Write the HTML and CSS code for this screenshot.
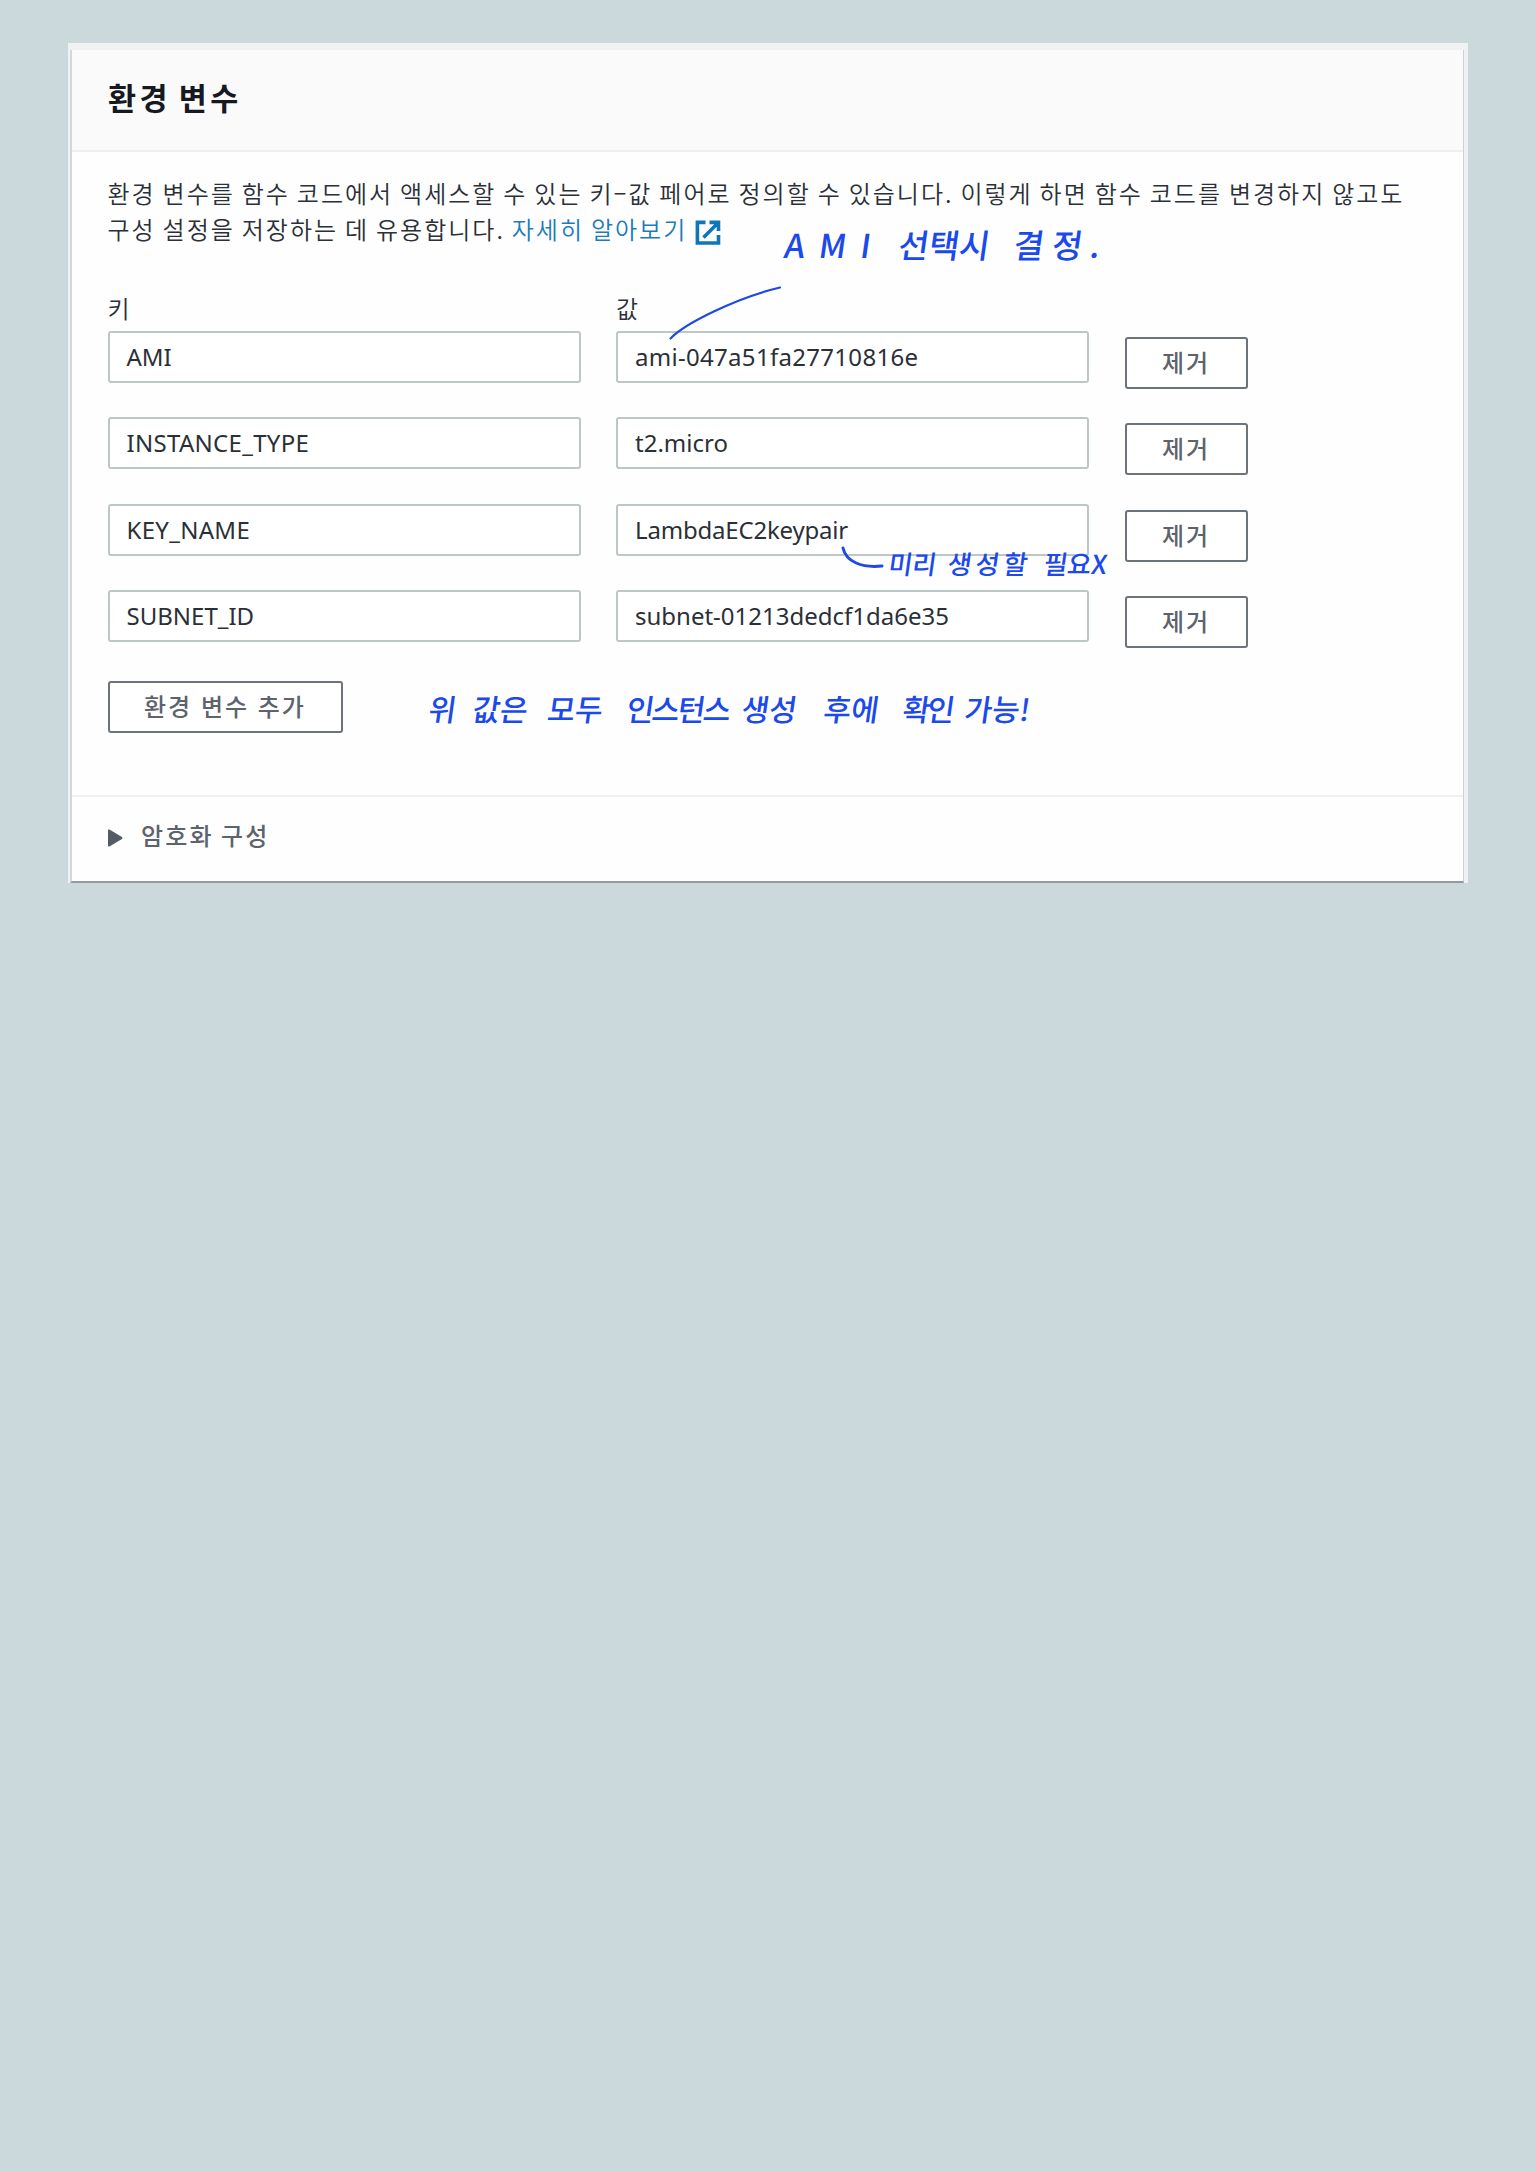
FILE: index.html
```html
<!DOCTYPE html>
<html lang="ko">
<head>
<meta charset="utf-8">
<title>환경 변수</title>
<link rel="stylesheet" href="styles.css">
</head>
<body>
<main class="frame">
  <section class="card">
    <header class="card-header"><h1 class="title">환경 변수</h1></header>
    <div class="card-body">
      <p class="intro">환경 변수를 함수 코드에서 액세스할 수 있는 키–값 페어로 정의할 수 있습니다. 이렇게 하면 함수 코드를 변경하지 않고도<br>구성 설정을 저장하는 데 유용합니다. <a class="link">자세히 알아보기<svg class="external" viewBox="0 0 26 26"><path d="M10.500 2.400H2.400V23H23.500V15" /><path d="M14.500 2.400H23.500V11M22.500 3.500L8.500 17.500" /></svg></a></p>
      <div class="grid labels"><span>키</span><span>값</span></div>
      <div class="grid rows">
        <div class="field">AMI</div><div class="field wide">ami-047a51fa27710816e</div><button class="btn remove">제거</button>
        <div class="field wide">INSTANCE_TYPE</div><div class="field">t2.micro</div><button class="btn remove">제거</button>
        <div class="field wide">KEY_NAME</div><div class="field tight">LambdaEC2keypair</div><button class="btn remove">제거</button>
        <div class="field">SUBNET_ID</div><div class="field">subnet-01213dedcf1da6e35</div><button class="btn remove">제거</button>
      </div>
      <button class="btn add">환경 변수 추가</button>
    </div>
    <footer class="card-footer"><svg class="caret" viewBox="0 0 15 18"><path d="M0 1.2Q0 0 1.4 .6L14 8Q15 9 14 10L1.4 17.4Q0 18 0 16.8Z"/></svg><span>암호화 구성</span></footer>
  </section>
  <svg class="leads" viewBox="0 0 1400 839">
    <path d="M602.500 295.500C616 281 668 255 712 244.500"/>
    <path class="thick" d="M775 505C778 519 794 525 814 523"/>
  </svg>
  <div class="note note-ami"><span class="spread">AMI</span><span>선택시</span><span class="loose">결정.</span></div>
  <div class="note note-key"><span>미리</span><span class="open">생성할</span><span>필요X</span></div>
  <div class="note note-all"><span>위</span><span>값은</span><span>모두</span><span class="close">인스턴스</span><span>생성</span><span>후에</span><span class="packed">확인</span><span>가능!</span></div>
</main>
</body>
</html>
```
FILE: styles.css
```css
* { box-sizing: border-box; }

body {
  margin: 0;
  min-height: 2172px;
  padding: 43px 68px 0;
  background: #cbd9dd;
  color: #2b3038;
  font-family: "Noto Sans CJK KR", "Noto Sans", sans-serif;
}

.frame {
  position: relative;
  width: 1400px;
  height: 840px;
  padding: 7px 4px 0 2px;
  background: #eef2f2;
}

.card {
  display: flex;
  flex-direction: column;
  height: 833px;
  border: solid;
  border-width: 0 1px 2px 2px;
  border-color: #c8cdcf #cdd0d4 #929b9f #d5d8d9;
  background: #fefefe;
}

.card-header {
  height: 102px;
  padding: 0 36px;
  border-bottom: 2px solid #eef0f0;
  background: #fafafa;
}

.title {
  margin: 0;
  color: #16191f;
  font-size: 30.500px;
  font-weight: 700;
  line-height: 95px;
  letter-spacing: 3.400px;
  word-spacing: -4px;
}

.card-body {
  height: 643px;
  padding: 22.500px 36px 0 35.500px;
}

.intro {
  height: 109.500px;
  margin: 0;
  font-size: 24px;
  font-weight: 350;
  line-height: 36px;
  letter-spacing: 2px;
  word-spacing: -1.800px;
  white-space: nowrap;
}

.link { color: #1b7bbd; }

.external {
  width: 26px;
  height: 26px;
  margin-left: 8px;
  vertical-align: -7px;
  fill: none;
  stroke: #0f76b8;
  stroke-width: 3.600;
}

.grid {
  display: grid;
  grid-template-columns: 473px 473px 123px;
  column-gap: 35.500px;
  row-gap: 34.400px;
}

.rows { grid-template-rows: repeat(4, 52px); }

.labels {
  height: 47px;
  padding-top: 6px;
  font-size: 24px;
  font-weight: 350;
  line-height: 36px;
}

.field {
  height: 52px;
  padding-left: 17px;
  border: 2px solid #bdc7c8;
  border-radius: 3px;
  background: #fff;
  font-family: "Noto Sans", sans-serif;
  font-size: 24px;
  line-height: 48px;
}

.wide { letter-spacing: .3px; }
.tight { letter-spacing: -.2px; }

.btn {
  height: 52px;
  padding: 0 0 2px;
  border: 2px solid #6c737b;
  border-radius: 3px;
  background: #fff;
  color: #5c636c;
  font-family: inherit;
  font-size: 24px;
  font-weight: 500;
  line-height: 44px;
  letter-spacing: 2px;
}

.remove { margin-top: 6px; }
.add { width: 235px; margin-top: 39px; }

.card-footer {
  display: flex;
  align-items: center;
  height: 86px;
  padding: 0 36px 4px;
  border-top: 2px solid #eff1f1;
  color: #5c636c;
  font-size: 24px;
  font-weight: 500;
  letter-spacing: 2.200px;
  word-spacing: -1.800px;
}

.card-footer span { padding-bottom: 6px; }

.caret {
  width: 15px;
  height: 18px;
  margin: 2px 18px 0 0;
  fill: #545b64;
}

.leads {
  position: absolute;
  inset: 0;
  width: 1400px;
  height: 839px;
  fill: none;
  stroke: #1d49e5;
  stroke-width: 2.200;
  stroke-linecap: round;
}

.thick { stroke-width: 3; }

.note {
  position: absolute;
  display: grid;
  color: #1b49ec;
  font-weight: 500;
  white-space: nowrap;
  transform: skewX(-8deg);
}

.note-ami {
  left: 717px;
  top: 178px;
  grid-template-columns: 114px 115px auto;
  font-size: 33px;
  line-height: 46px;
}

.note-key {
  left: 821px;
  top: 502px;
  grid-template-columns: 59px 96px auto;
  font-size: 26px;
  line-height: 36px;
}

.note-all {
  left: 361px;
  top: 643px;
  grid-template-columns: 44px 75px 79px 115px 82px 79px 62px auto;
  font-size: 30px;
  line-height: 44px;
}

.spread { letter-spacing: 14px; }
.loose { letter-spacing: 8px; }
.open { letter-spacing: 4px; }
.close { letter-spacing: -2px; }
.packed { letter-spacing: -3px; }
```
